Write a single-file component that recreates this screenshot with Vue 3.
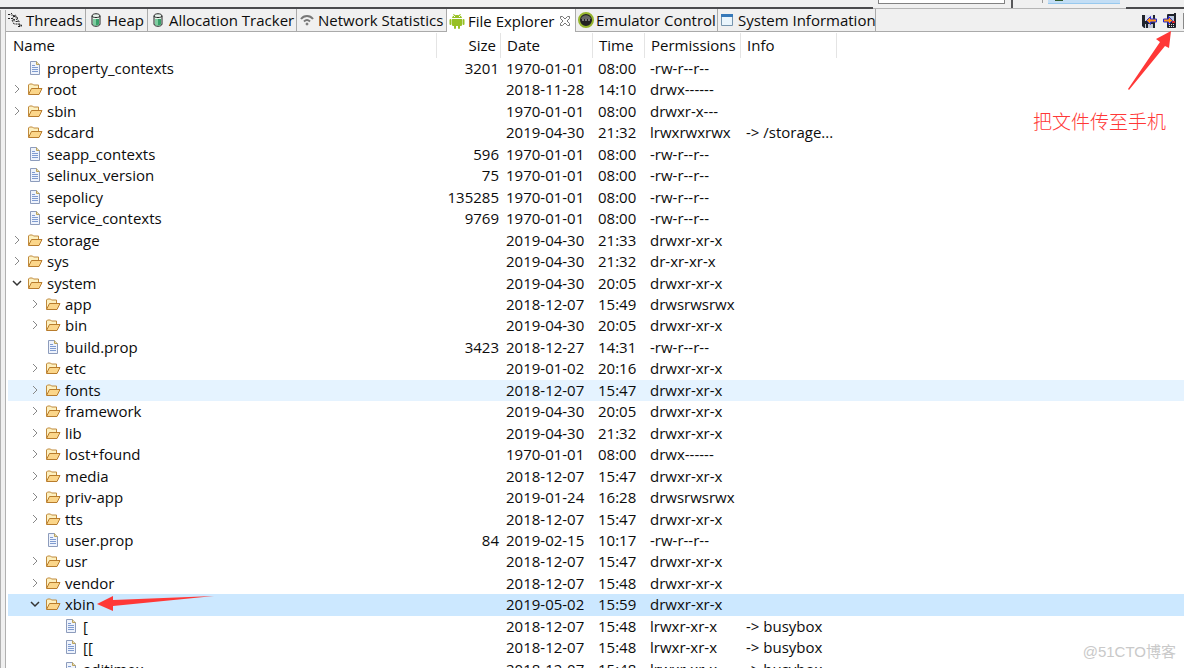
<script setup>
const tabs = [
  { id: 'threads', label: 'Threads' },
  { id: 'heap', label: 'Heap' },
  { id: 'allocation', label: 'Allocation Tracker' },
  { id: 'network', label: 'Network Statistics' },
  { id: 'files', label: 'File Explorer', active: true },
  { id: 'emulator', label: 'Emulator Control' },
  { id: 'system', label: 'System Information' }
]

const row = (depth, kind, name, size, date, time, perms, info = '', state = '') =>
  ({ depth, kind, name, size, date, time, perms, info, state })

// kind: file, dir (collapsed), open (expanded), link (folder without children)
const rows = [
  row(0, 'file', 'property_contexts', '3201', '1970-01-01', '08:00', '-rw-r--r--'),
  row(0, 'dir', 'root', '', '2018-11-28', '14:10', 'drwx------'),
  row(0, 'dir', 'sbin', '', '1970-01-01', '08:00', 'drwxr-x---'),
  row(0, 'link', 'sdcard', '', '2019-04-30', '21:32', 'lrwxrwxrwx', '-> /storage...'),
  row(0, 'file', 'seapp_contexts', '596', '1970-01-01', '08:00', '-rw-r--r--'),
  row(0, 'file', 'selinux_version', '75', '1970-01-01', '08:00', '-rw-r--r--'),
  row(0, 'file', 'sepolicy', '135285', '1970-01-01', '08:00', '-rw-r--r--'),
  row(0, 'file', 'service_contexts', '9769', '1970-01-01', '08:00', '-rw-r--r--'),
  row(0, 'dir', 'storage', '', '2019-04-30', '21:33', 'drwxr-xr-x'),
  row(0, 'dir', 'sys', '', '2019-04-30', '21:32', 'dr-xr-xr-x'),
  row(0, 'open', 'system', '', '2019-04-30', '20:05', 'drwxr-xr-x'),
  row(1, 'dir', 'app', '', '2018-12-07', '15:49', 'drwsrwsrwx'),
  row(1, 'dir', 'bin', '', '2019-04-30', '20:05', 'drwxr-xr-x'),
  row(1, 'file', 'build.prop', '3423', '2018-12-27', '14:31', '-rw-r--r--'),
  row(1, 'dir', 'etc', '', '2019-01-02', '20:16', 'drwxr-xr-x'),
  row(1, 'dir', 'fonts', '', '2018-12-07', '15:47', 'drwxr-xr-x', '', 'hovered'),
  row(1, 'dir', 'framework', '', '2019-04-30', '20:05', 'drwxr-xr-x'),
  row(1, 'dir', 'lib', '', '2019-04-30', '21:32', 'drwxr-xr-x'),
  row(1, 'dir', 'lost+found', '', '1970-01-01', '08:00', 'drwx------'),
  row(1, 'dir', 'media', '', '2018-12-07', '15:47', 'drwxr-xr-x'),
  row(1, 'dir', 'priv-app', '', '2019-01-24', '16:28', 'drwsrwsrwx'),
  row(1, 'dir', 'tts', '', '2018-12-07', '15:47', 'drwxr-xr-x'),
  row(1, 'file', 'user.prop', '84', '2019-02-15', '10:17', '-rw-r--r--'),
  row(1, 'dir', 'usr', '', '2018-12-07', '15:47', 'drwxr-xr-x'),
  row(1, 'dir', 'vendor', '', '2018-12-07', '15:48', 'drwxr-xr-x'),
  row(1, 'open', 'xbin', '', '2019-05-02', '15:59', 'drwxr-xr-x', '', 'selected'),
  row(2, 'file', '[', '', '2018-12-07', '15:48', 'lrwxr-xr-x', '-> busybox'),
  row(2, 'file', '[[', '', '2018-12-07', '15:48', 'lrwxr-xr-x', '-> busybox'),
  row(2, 'file', 'adjtimex', '', '2018-12-07', '15:48', 'lrwxr-xr-x', '-> busybox')
]
</script>

<template>
  <div class="window">
    <header class="toolbar">
      <span class="edge"></span>
      <div class="tools">
        <input class="quick" type="text" aria-label="Quick Access">
        <span class="divider"></span>
        <span class="separator"></span>
        <button class="perspective" type="button" aria-label="DDMS perspective"><span class="droid"></span></button>
      </div>
      <span class="edge end"></span>
    </header>

    <div class="body">
      <div class="sash"></div>
      <main class="view">
        <div class="tabbar">
          <div class="tabs" role="tablist">
            <div v-for="t in tabs" :key="t.id" class="tab" :class="[t.id, { active: t.active }]">
              <button class="pick" type="button" role="tab" :aria-selected="t.active ? 'true' : 'false'">
                <svg v-if="t.id === 'threads'" class="icon" viewBox="0 0 16 16" fill="none" stroke="#222" aria-hidden="true">
                  <path d="M1 2.500h3l2 2h3M4 1l3 3-2 3 4 1M1 6.500h4l3 3h4M7 4l2-1v4l3 2v3l3 2M5 8l2 4h4l2 2M10 5l1 3M11 14.500h3v-3" stroke-dasharray="2 1" />
                </svg>
                <svg v-else-if="t.id === 'heap' || t.id === 'allocation'" class="icon" viewBox="0 0 16 16" aria-hidden="true">
                  <path d="M4 4c0-3 8-3 8 0v8c0 3-8 3-8 0z" fill="#e9f3ec" stroke="#222" />
                  <path d="M5 7h6v5c0 2-6 2-6 0z" fill="#38a169" />
                  <path d="M5 7h3v6c-2 0-3 0-3-1z" fill="#7fcda0" />
                  <path d="M4 4c0 2 8 2 8 0" fill="none" stroke="#222" />
                </svg>
                <svg v-else-if="t.id === 'network'" class="icon" viewBox="0 0 16 16" fill="none" stroke="#777" stroke-width="2" aria-hidden="true">
                  <path d="M2 7c3-4 9-4 12 0M5 9.500c2-2 4-2 6 0" />
                  <circle cx="8" cy="12" r="1" fill="#777" stroke-width="1" />
                </svg>
                <svg v-else-if="t.id === 'files'" class="icon" viewBox="0 0 16 16" fill="#97c024" aria-hidden="true">
                  <path d="M3 5c0-4 10-4 10 0zM3 6h10v6q0 1-1 1H4q-1 0-1-1z" />
                  <path d="M1.500 7v4M14.500 7v4M6 12v3M10 12v3" stroke="#97c024" stroke-width="2" stroke-linecap="round" />
                  <path d="M4.500 1l1.500 2M11.500 1L10 3" stroke="#97c024" />
                  <path d="M5 4h1v-1h-1zM10 4h1v-1h-1z" fill="#fff" />
                </svg>
                <svg v-else-if="t.id === 'emulator'" class="icon" viewBox="0 0 16 16" aria-hidden="true">
                  <circle cx="8" cy="8" r="7" fill="#222" stroke="#96b52d" stroke-width="2" />
                  <path d="M3 7c1-5 9-5 10 0z" fill="#666" />
                  <path d="M4 8h8" stroke="#ccc" stroke-dasharray="2 1" />
                </svg>
                <svg v-else class="icon" viewBox="0 0 16 16" aria-hidden="true">
                  <path d="M2.500 2.500h11v11h-11z" fill="#eaf5fc" stroke="#7694ad" />
                  <path d="M2 2h12v3H2z" fill="#3678b8" />
                </svg>
                <span>{{ t.label }}</span>
              </button>
              <button v-if="t.active" class="close" type="button" aria-label="Close File Explorer">
                <svg viewBox="0 0 12 12" fill="#fff" stroke="#777" aria-hidden="true">
                  <path d="M1.500 1.500h2L6 4l2.500-2.500h2v2L8 6l2.500 2.500v2h-2L6 8l-2.500 2.500h-2v-2L4 6 1.500 3.500z" />
                </svg>
              </button>
            </div>
          </div>
          <div class="actions">
            <button type="button" aria-label="Pull a file from the device">
              <svg class="icon" viewBox="0 0 16 16" aria-hidden="true">
                <path d="M1 2h13v13H3l-2-2z" fill="#20242c" />
                <path d="M4 2h8v6H4z" fill="#dfe3ee" />
                <path d="M4 11h8v4H4z" fill="#c5cad6" />
                <path d="M5 11h2v4H5z" fill="#20242c" />
                <path d="M5.500 7.500l4-4v2.500h6v3h-6v2.500z" fill="#ff9614" stroke="#2b2bd0" />
              </svg>
            </button>
            <button type="button" aria-label="Push a file onto the device">
              <svg class="icon" viewBox="0 0 16 16" aria-hidden="true">
                <path d="M5 2q0-1 1-1h6V0h2v14q0 1-1 1H6q-1 0-1-1z" fill="#20222a" />
                <path d="M7 3h5v5H7z" fill="#b9c7dc" />
                <path d="M7 11h1v1H7zM9 11h1v1H9zM11 11h1v1h-1zM7 13h1v1H7zM9 13h1v1H9zM11 13h1v1h-1z" fill="#ddd" />
                <path d="M10 8h3v2h-3z" fill="#d2222a" />
                <path d="M10.500 7.500l-4-4v2.500h-5v3h5v2.500z" fill="#ff9614" stroke="#2b2bd0" />
              </svg>
            </button>
            <span class="rule"></span>
          </div>
        </div>

        <table class="tree">
          <thead>
            <tr>
              <th scope="col">Name</th>
              <th scope="col" class="size">Size</th>
              <th scope="col">Date</th>
              <th scope="col">Time</th>
              <th scope="col">Permissions</th>
              <th scope="col">Info</th>
            </tr>
          </thead>
          <tbody>
            <tr v-for="r in rows" :key="r.name" :class="r.state">
              <td class="name" :class="'depth' + r.depth">
                <span class="twisty">
                  <svg v-if="r.kind === 'dir'" viewBox="0 0 10 10" fill="none" stroke="#888" aria-hidden="true"><path d="M3 1l4 4-4 4" /></svg>
                  <svg v-else-if="r.kind === 'open'" viewBox="0 0 10 10" fill="none" stroke="#333" stroke-width="1.500" aria-hidden="true"><path d="M1 3l4 4 4-4" /></svg>
                </span>
                <svg v-if="r.kind === 'file'" class="icon" viewBox="0 0 16 16" aria-hidden="true">
                  <path d="M3.500 1.500h6l3 3v10h-9z" fill="#eef3fc" stroke="#8d9cbc" />
                  <path d="M9.500 1.500v3h3" fill="#f3dfa2" stroke="#b8a15f" />
                  <path d="M5 5.500h3M5 7.500h6M5 9.500h6M5 11.500h6" stroke="#7f9bd0" />
                </svg>
                <svg v-else class="icon" viewBox="0 0 16 16" aria-hidden="true">
                  <path d="M1.500 13v-9l1-1h3l1 1h5v3.500" fill="#fdf0c0" stroke="#c08a3c" />
                  <path d="M1.500 13.500l3-6h10.500l-3 6z" fill="#fbd68a" stroke="#b87c2c" stroke-linejoin="round" />
                </svg>
                <span>{{ r.name }}</span>
                <svg v-if="r.state === 'selected'" class="pointer" viewBox="0 0 118 18" aria-hidden="true">
                  <path d="M0 9L16 1v4L117 1 16 11v5z" fill="#ff3837" />
                </svg>
              </td>
              <td class="size">{{ r.size }}</td>
              <td>{{ r.date }}</td>
              <td>{{ r.time }}</td>
              <td>{{ r.perms }}</td>
              <td>{{ r.info }}</td>
            </tr>
          </tbody>
        </table>
      </main>
    </div>

    <aside class="note">
      <svg viewBox="0 0 44 60" aria-hidden="true"><path d="M43 0L28 8l4 3L0 58l1 1 36-44 4 2z" fill="#ff3837" /></svg>
      <p>把文件传至手机</p>
    </aside>
    <span class="watermark">@51CTO博客</span>
  </div>
</template>

<style>
html, body, #app { height: 100%; }
body { margin: 0; overflow: hidden; }
</style>

<style scoped>
.window {
  position: relative;
  display: flex;
  flex-direction: column;
  height: 100%;
  overflow: hidden;
  background: #f0f0f0;
  color: #0c0c0c;
  font-family: "Open Sans", "Noto Sans CJK SC", sans-serif;
  font-size: 15px;
  line-height: 20px;
}
button {
  margin: 0;
  padding: 0;
  border: 0;
  background: none;
  color: inherit;
  font: inherit;
}
svg { display: block; flex: none; }
.icon { width: 16px; height: 16px; }

.toolbar { display: flex; flex: none; height: 9px; }
.edge { flex: 1; box-sizing: border-box; border-bottom: 2px solid #4b4b4d; }
.edge.end { flex: 0 0 58px; }
.tools {
  display: flex;
  flex: 0 0 253px;
  box-sizing: border-box;
  border-bottom: 1px solid #b5b5b5;
}
.quick {
  box-sizing: border-box;
  width: 127px;
  height: 4px;
  margin-left: 5px;
  padding: 0;
  border: 1px solid #828282;
  border-top: 0;
  background: #fff;
}
.divider { width: 2px; margin-left: 6px; background: #58585a; }
.separator { width: 1px; height: 3px; margin-left: 29px; background: #999; }
.perspective {
  display: flex;
  box-sizing: border-box;
  width: 72px;
  height: 4px;
  margin-left: 5px;
  padding-left: 7px;
  border-bottom: 1px solid #98c9ee;
  background: #c3def5;
}
.droid { width: 8px; height: 1px; background: #2e5a2e; }

.body { display: flex; flex: 1; min-height: 0; }
.sash {
  flex: none;
  box-sizing: border-box;
  width: 6px;
  margin-top: 1px;
  border: solid #b0b0b0;
  border-width: 0 1px;
}
.view { display: flex; flex: 1; flex-direction: column; min-width: 0; overflow: hidden; }
.tabbar {
  display: flex;
  flex: none;
  justify-content: space-between;
  height: 23px;
  background: linear-gradient(#aaa, #aaa) bottom / 100% 1px no-repeat;
}
.tabs { display: flex; }
.tab {
  display: flex;
  box-sizing: border-box;
  height: 22px;
  padding: 0 0 0 2px;
  border-right: 1px solid #aaa;
}
.tab.active { height: 23px; background: #fff; }
.pick { display: flex; align-items: center; gap: 3px; white-space: nowrap; }
.close { width: 12px; margin-left: 4px; }
.threads { width: 80px; padding-left: 1px; }
.heap { width: 62px; }
.allocation { width: 149px; }
.network { width: 150px; }
.files { width: 129px; }
.emulator { width: 142px; }
.system { width: 158px; padding-left: 1px; }
.emulator .pick { gap: 2px; }
.actions { display: flex; align-items: center; gap: 5px; }
.rule { width: 1px; height: 16px; background: #888; }

.tree { display: block; background: #fff; flex: 1; }
thead, tbody { display: block; }
tr {
  display: grid;
  grid-template-columns: 431px 64px 92px 52px 96px 96px;
  align-items: center;
  white-space: nowrap;
}
thead tr { height: 26px; padding-top: 1px; box-sizing: border-box; }
th {
  box-sizing: border-box;
  height: 25px;
  padding: 2px 0 0 6px;
  border-right: 1px solid #e4e4e4;
  font-weight: 400;
  text-align: left;
}
th:first-child { padding-left: 7px; }
th.size { padding: 2px 4px 0 0; text-align: right; }
tbody { display: flex; flex-direction: column; height: 622px; }
tbody tr { flex: 1; min-height: 0; margin-left: 2px; grid-template-columns: 429px 64px 92px 52px 96px 96px; }
td { padding: 0 0 2px 5px; }
td.size { padding: 0 2px 2px 0; text-align: right; }
td.name { display: flex; align-items: center; padding-left: 4px; }
td.depth1 { padding-left: 22px; }
td.depth2 { padding-left: 40px; }
.name .icon { margin-right: 4px; }
.twisty { width: 10px; height: 10px; margin-right: 5px; }
.pointer { width: 118px; height: 18px; margin-left: 2px; }
.hovered { background: #e5f3ff; }
.selected { background: #cce8ff; }

.note {
  position: absolute;
  top: 31px;
  right: 12px;
  display: flex;
  flex-direction: column;
  align-items: flex-end;
  color: #ff3837;
  font-family: "Liberation Serif", "Noto Sans CJK SC", serif;
  font-size: 19px;
  font-weight: 300;
  line-height: 24px;
}
.note svg { width: 44px; height: 60px; }
.note p { margin: 20px 6px 0 0; }
.watermark {
  position: absolute;
  right: 8px;
  bottom: 6px;
  color: #c9c9c9;
  font-family: "Liberation Sans", "Noto Sans CJK SC", sans-serif;
  font-size: 15px;
}
</style>
